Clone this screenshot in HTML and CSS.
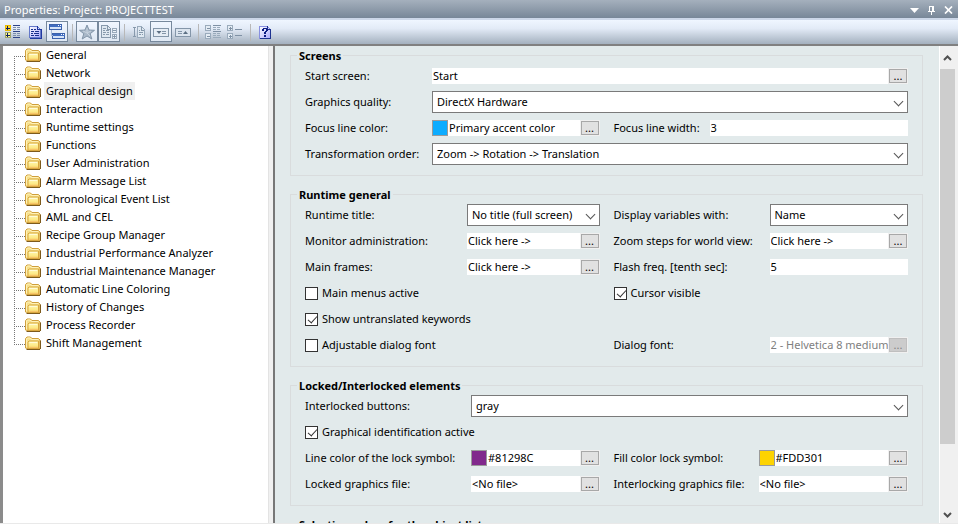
FILE: index.html
```html
<!DOCTYPE html>
<html lang="en">
<head>
<meta charset="utf-8">
<title>Properties</title>
<link rel="stylesheet" href="styles.css">
</head>
<body>
<svg class="defs" aria-hidden="true">
  <defs>
    <linearGradient id="fold" x1="0" y1="0" x2="0" y2="1"><stop offset="0" stop-color="#fff9b4"/><stop offset=".6" stop-color="#fdea88"/><stop offset="1" stop-color="#f6c860"/></linearGradient>
    <linearGradient id="page" x1="0" y1="0" x2="1" y2="1"><stop offset="0" stop-color="#ffffff"/><stop offset="1" stop-color="#a9a9ff"/></linearGradient>
  </defs>
  <symbol id="folder" viewBox="0 0 16 14">
    <path d="M.5 12V2.500L2 1h3.500L7 2.500h6.500L15 4v8.500H1.500z" fill="#f7e08a" stroke="#cf9f3c"/>
    <path d="M1.500 11V3L2.500 2H5l1.500 1.500H13" fill="none" stroke="#fff2b8"/>
    <path d="M3 12.500V6L4 5h9.500v7.500z" fill="url(#fold)" stroke="#d8a840"/>
    <path d="M4.500 6.500H12" stroke="#fffbd8"/>
    <path d="M15.500 4.500V13M1.500 13.500H15" stroke="#7d5a1c"/>
    <path d="M5 11.500h8" stroke="#f7c468"/>
  </symbol>
</svg>
<main class="window">
  <header class="titlebar">
    <h1>Properties: Project: PROJECTTEST</h1>
    <div class="caption">
      <button aria-label="Menu"><svg width="9" height="5" viewBox="0 0 9 5"><path d="M0 0h9L4.500 5z" fill="#fff"/></svg></button>
      <button aria-label="Pin"><svg width="8" height="9" viewBox="0 0 8 9" shape-rendering="crispEdges"><path d="M1 0h5v1H1zM1 1h1v4H1zM4 1h2v4H4zM0 5h7v1H0zM3 6h1v3H3z" fill="#fff"/></svg></button>
      <button aria-label="Close"><svg width="9" height="8" viewBox="0 0 9 8"><path d="M1 .5l7 7M8 .5l-7 7" stroke="#fff" stroke-width="1.700"/></svg></button>
    </div>
  </header>

  <div class="toolbar" role="toolbar">
    <button aria-label="Grouped view"><svg viewBox="0 0 16 16" shape-rendering="crispEdges">
      <path d="M0 1h6v6H0z" fill="#e8b800"/><path d="M1 2h4v4H1z" fill="#ffd92e"/><path d="M0 8h6v6H0z" fill="#9da36a"/><path d="M1 9h4v4H1z" fill="#fff88c"/>
      <path d="M2 2h1v4H2zM1 4h4v1H1zM2 9h1v4H2zM1 11h4v1H1z" fill="#102060"/>
      <path d="M8 1.500h7M8 7.500h7" stroke="#2c4388"/><path d="M8 3.500h3M12 3.500h3M8 5.500h3M12 5.500h3M8 9.500h3M12 9.500h3M8 11.500h3M12 11.500h3" stroke="#7b8fae"/><path d="M8 13.500h7" stroke="#2c4388"/></svg></button>
    <button aria-label="All properties"><svg viewBox="0 0 16 16" shape-rendering="crispEdges">
      <path d="M2.500 2.500h8l3 3v8h-11z" fill="url(#page)" stroke="#6478c8"/><path d="M10.500 2v3.500H14V14H3" fill="none" stroke="#2038a0"/>
      <path d="M4 5.500h2M7 5.500h2M4 7.500h3M8 7.500h4M4 9.500h2M7 9.500h5M4 11.500h3M8 11.500h4" stroke="#18308c"/></svg></button>
    <button class="on" aria-label="Dialog view"><svg viewBox="0 0 16 16" shape-rendering="crispEdges">
      <rect x=".5" y=".5" width="12" height="5" rx="1" fill="#d5e3f8" stroke="#3c62ac"/><path d="M1 1h12v2H1z" fill="#3f6cc0"/><path d="M9 1.500h1M11 1.500h1" stroke="#fff"/>
      <rect x="3.500" y="9.500" width="12" height="5" rx="1" fill="#d5e3f8" stroke="#3c62ac"/><path d="M4 10h12v2H4z" fill="#3f6cc0"/><path d="M12 10.500h1M14 10.500h1" stroke="#fff"/><path d="M2.500 6v5.500H4" fill="none" stroke="#a4b8d8"/></svg></button>
    <span class="sep"></span>
    <button class="on" aria-label="Favorites"><svg viewBox="0 0 16 16"><path d="M8 1l2 5 5.500.3-4.300 3.400 1.600 5.300L8 12l-4.800 3 1.600-5.300L.5 6.300 6 6z" fill="#a9b8c8" stroke="#8295a9"/><path d="M8 4v5l3 3M8 9l4-2M8 9L4 7" stroke="#c6d2de" fill="none"/></svg></button>
    <button class="on" aria-label="Expand page"><svg viewBox="0 0 16 16" shape-rendering="crispEdges">
      <path d="M.5 1.500h6l3 3v9h-9z" fill="#dfe8f1" stroke="#8799ac"/><path d="M6.500 2v3H9M2 4.500h3M2 6.500h2M5 6.500h3M2 8.500h3M6 8.500h2M2 10.500h2M5 10.500h3" stroke="#8799ac" fill="none"/>
      <path d="M11.500 4.500h4v4h-4zM11.500 10.500h4v4h-4z" fill="#eef4fa" stroke="#9aaabb"/><path d="M12 6.500h3M12 12.500h3M13.500 11v3" stroke="#8799ac"/></svg></button>
    <span class="sep"></span>
    <button aria-label="Sort"><svg viewBox="0 0 16 16" shape-rendering="crispEdges">
      <path d="M6.500 2.500h4l3 3v8h-7z" fill="#dfe8f1" stroke="#9aabbc"/><path d="M10.500 3v3H13M8 6.500h1M8 8.500h4M8 10.500h2M11 10.500h1" stroke="#8799ac" fill="none"/><path d="M3.500 3v10M2 3.500h3M2 12.500h3" stroke="#8799ac"/></svg></button>
    <button class="on" aria-label="Expand"><svg viewBox="0 0 16 16"><rect x=".5" y="4.500" width="15" height="8" fill="#e6edf5" stroke="#8496a9"/><path d="M3.500 7h5L6 10z" fill="#5c6f83"/><path d="M9 7.500h4M9 9.500h4" stroke="#8496a9"/></svg></button>
    <button aria-label="Collapse"><svg viewBox="0 0 16 16"><rect x=".5" y="4.500" width="15" height="8" fill="#dbe4ee" stroke="#8496a9"/><path d="M8 10h5l-2.500-3z" fill="#5c6f83"/><path d="M3 7.500h4M3 9.500h4" stroke="#8496a9"/></svg></button>
    <span class="sep"></span>
    <button aria-label="Collapse all"><svg viewBox="0 0 16 16" shape-rendering="crispEdges"><path d="M.5 1.500h5v5h-5zM.5 9.500h5v5h-5z" fill="#e4ecf4" stroke="#9aabbc"/><path d="M2 4.500h3M2 12.500h3M8 1.500h8M8 7.500h8" stroke="#7f91a5"/><path d="M8 3.500h3M12 3.500h3M8 5.500h3M12 5.500h3M8 9.500h3M12 9.500h3M8 11.500h3M12 11.500h3M8 13.500h8" stroke="#9aabbc"/></svg></button>
    <button aria-label="Expand all"><svg viewBox="0 0 16 16" shape-rendering="crispEdges"><path d="M.5 1.500h5v5h-5zM.5 9.500h5v5h-5z" fill="#e4ecf4" stroke="#9aabbc"/><path d="M2 4.500h3M3.500 3v3M2 12.500h3M3.500 11v3M8 5.500h7M8 11.500h7" stroke="#7f91a5"/></svg></button>
    <span class="sep"></span>
    <button aria-label="Help"><svg viewBox="0 0 16 16" shape-rendering="crispEdges"><path d="M2.500 2.500h8l3 3v9h-11z" fill="url(#page)" stroke="#8890e0"/><path d="M10.500 2v3.500H13.500v9H3" fill="none" stroke="#1e3290"/><path d="M6 4h4v1H6zM5 5h2v2H5zM9 5h2v2H9zM8 7h2v1H8zM7 8h2v2H7zM7 11h2v2H7z" fill="#0c1c84"/></svg></button>
  </div>

  <div class="body">
    <nav class="tree">
      <ul>
        <li><svg><use href="#folder"/></svg><a href="#">General</a></li>
        <li><svg><use href="#folder"/></svg><a href="#">Network</a></li>
        <li><svg><use href="#folder"/></svg><a href="#" class="current">Graphical design</a></li>
        <li><svg><use href="#folder"/></svg><a href="#">Interaction</a></li>
        <li><svg><use href="#folder"/></svg><a href="#">Runtime settings</a></li>
        <li><svg><use href="#folder"/></svg><a href="#">Functions</a></li>
        <li><svg><use href="#folder"/></svg><a href="#">User Administration</a></li>
        <li><svg><use href="#folder"/></svg><a href="#">Alarm Message List</a></li>
        <li><svg><use href="#folder"/></svg><a href="#">Chronological Event List</a></li>
        <li><svg><use href="#folder"/></svg><a href="#">AML and CEL</a></li>
        <li><svg><use href="#folder"/></svg><a href="#">Recipe Group Manager</a></li>
        <li><svg><use href="#folder"/></svg><a href="#">Industrial Performance Analyzer</a></li>
        <li><svg><use href="#folder"/></svg><a href="#">Industrial Maintenance Manager</a></li>
        <li><svg><use href="#folder"/></svg><a href="#">Automatic Line Coloring</a></li>
        <li><svg><use href="#folder"/></svg><a href="#">History of Changes</a></li>
        <li><svg><use href="#folder"/></svg><a href="#">Process Recorder</a></li>
        <li><svg><use href="#folder"/></svg><a href="#">Shift Management</a></li>
      </ul>
    </nav>

    <form class="panel">
      <fieldset class="screens">
        <legend>Screens</legend>
        <div class="rows">
          <div class="item wide"><label for="start">Start screen:</label><div class="field"><input id="start" type="text" value="Start"><button type="button" aria-label="Choose start screen">...</button></div></div>
          <div class="item wide"><label for="quality">Graphics quality:</label><div class="drop"><select id="quality"><option>DirectX Hardware</option></select></div></div>
          <div class="item"><label for="focus">Focus line color:</label><div class="field"><span class="swatch blue"></span><input id="focus" type="text" value="Primary accent color"><button type="button" aria-label="Choose focus color">...</button></div></div>
          <div class="item"><label for="width">Focus line width:</label><div class="field"><input id="width" type="text" value="3"></div></div>
          <div class="item wide"><label for="order">Transformation order:</label><div class="drop"><select id="order"><option>Zoom -&gt; Rotation -&gt; Translation</option></select></div></div>
        </div>
      </fieldset>

      <fieldset class="runtime">
        <legend>Runtime general</legend>
        <div class="rows">
          <div class="item"><label for="rtitle">Runtime title:</label><div class="drop"><select id="rtitle"><option>No title (full screen)</option></select></div></div>
          <div class="item"><label for="vars">Display variables with:</label><div class="drop"><select id="vars"><option>Name</option></select></div></div>
          <div class="item"><label for="monitor">Monitor administration:</label><div class="field"><input id="monitor" type="text" value="Click here -&gt;"><button type="button" aria-label="Monitor administration">...</button></div></div>
          <div class="item"><label for="zoom">Zoom steps for world view:</label><div class="field"><input id="zoom" type="text" value="Click here -&gt;"><button type="button" aria-label="Zoom steps">...</button></div></div>
          <div class="item"><label for="frames">Main frames:</label><div class="field"><input id="frames" type="text" value="Click here -&gt;"><button type="button" aria-label="Main frames">...</button></div></div>
          <div class="item"><label for="flash">Flash freq. [tenth sec]:</label><div class="field"><input id="flash" type="text" value="5"></div></div>
          <div class="check"><input id="menus" type="checkbox"><label for="menus">Main menus active</label></div>
          <div class="check"><input id="cursor" type="checkbox" checked><label for="cursor">Cursor visible</label></div>
          <div class="check wide"><input id="untrans" type="checkbox" checked><label for="untrans">Show untranslated keywords</label></div>
          <div class="check"><input id="adjust" type="checkbox"><label for="adjust">Adjustable dialog font</label></div>
          <div class="item"><label for="font">Dialog font:</label><div class="field"><input id="font" type="text" value="2 - Helvetica 8 medium" disabled><button type="button" aria-label="Choose dialog font" disabled>...</button></div></div>
        </div>
      </fieldset>

      <fieldset class="locked">
        <legend>Locked/Interlocked elements</legend>
        <div class="rows">
          <div class="item wide"><label for="buttons">Interlocked buttons:</label><div class="drop"><select id="buttons"><option>gray</option></select></div></div>
          <div class="check wide"><input id="ident" type="checkbox" checked><label for="ident">Graphical identification active</label></div>
          <div class="item"><label for="lcolor">Line color of the lock symbol:</label><div class="field"><span class="swatch purple"></span><input id="lcolor" type="text" value="#81298C"><button type="button" aria-label="Choose line color">...</button></div></div>
          <div class="item"><label for="fcolor">Fill color lock symbol:</label><div class="field"><span class="swatch yellow"></span><input id="fcolor" type="text" value="#FDD301"><button type="button" aria-label="Choose fill color">...</button></div></div>
          <div class="item"><label for="lfile">Locked graphics file:</label><div class="field"><input id="lfile" type="text" value="&lt;No file&gt;"><button type="button" aria-label="Choose locked file">...</button></div></div>
          <div class="item"><label for="ifile">Interlocking graphics file:</label><div class="field"><input id="ifile" type="text" value="&lt;No file&gt;"><button type="button" aria-label="Choose interlocking file">...</button></div></div>
        </div>
      </fieldset>

      <fieldset>
        <legend>Selection colors for the object lists</legend>
      </fieldset>
    </form>

    <div class="scroll">
      <button aria-label="Scroll up"><svg width="9" height="6" viewBox="0 0 9 6"><path d="M1 5l3.500-3.500L8 5" fill="none" stroke="#505050" stroke-width="2"/></svg></button>
      <div class="thumb"></div>
      <div class="track"></div>
      <button aria-label="Scroll down"><svg width="9" height="6" viewBox="0 0 9 6"><path d="M1 1l3.500 3.500L8 1" fill="none" stroke="#505050" stroke-width="2"/></svg></button>
    </div>
  </div>
</main>
</body>
</html>
```
FILE: styles.css
```css
* { box-sizing: border-box; }

body {
  margin: 0;
  background: #fff;
  color: #000;
  font: 11px/16px "Noto Sans", "Open Sans", sans-serif;
}

button, input, select { font: inherit; color: inherit; margin: 0; }

.defs { position: absolute; width: 0; height: 0; }

.window {
  display: flex;
  flex-direction: column;
  height: 100vh;
  padding-bottom: 2px;
  overflow: hidden;
}

/* Title bar */
.titlebar {
  flex: none;
  display: flex;
  align-items: center;
  justify-content: space-between;
  height: 18px;
  padding: 2px 5px 0 4px;
  background: linear-gradient(#a5b0bd, #788798);
}

.titlebar h1 { margin: 0; font-size: 11px; font-weight: 400; color: #fff; }

.caption { display: flex; gap: 8px; }

.caption button {
  display: flex;
  align-items: center;
  justify-content: center;
  width: 9px;
  height: 12px;
  padding: 0;
  border: 0;
  background: none;
}

.caption svg { flex: none; }

/* Toolbar */
.toolbar {
  flex: none;
  display: flex;
  height: 28px;
  padding: 1px 2px 0;
  border-top: 2px solid #ccd7e8;
  border-bottom: 2px solid #808080;
  background: linear-gradient(#eff6ff, #e3ebf7 35%, #a3b0be);
}

.toolbar button {
  display: flex;
  align-items: center;
  justify-content: center;
  width: 22px;
  height: 21px;
  padding: 0;
  border: 0;
  background: none;
}

.toolbar button.on { border: 1px solid #76889c; background: linear-gradient(#f0f6ff, #dfe8f3); }
.toolbar svg { flex: none; width: 16px; height: 16px; }

.sep { width: 8px; padding: 3px 0; }
.sep::before { content: ""; display: block; width: 1px; height: 17px; margin-left: 4px; background: #b8b8b8; }

/* Columns */
.body {
  flex: 1;
  display: flex;
  min-height: 0;
  padding-right: 3px;
  border-bottom: 1px solid #e9e9e9;
  background: #f0f0f0;
}

/* Navigation tree */
.tree {
  flex: 0 0 269px;
  padding-left: 11px;
  border-left: 3px solid #8b8b8b;
  border-right: 1px solid #e3e3e3;
  background: #fff;
}

.tree ul { margin: 0; padding: 0; list-style: none; }
.tree li { display: flex; align-items: center; height: 18px; }
.tree svg { width: 16px; height: 14px; margin-right: 3px; }
.tree a { padding: 0 2px; line-height: 18px; color: inherit; text-decoration: none; }
.tree a.current { background: #f0f0f0; }

.tree li::before {
  content: "";
  width: 11px;
  height: 18px;
  background:
    repeating-linear-gradient(90deg, #777 0 1px, transparent 1px 2px) 0 10px / 11px 1px no-repeat,
    repeating-linear-gradient(#777 0 1px, transparent 1px 2px) 0 0 / 1px 18px no-repeat;
}

.tree li:first-child::before { background-position: 0 10px, 0 10px; }
.tree li:last-child::before { background-size: 11px 1px, 1px 10px; }

/* Property form */
.panel {
  flex: 1;
  display: flex;
  flex-direction: column;
  gap: 10px;
  min-width: 0;
  margin-left: 4px;
  padding: 1px 16px 0 15px;
  overflow: hidden;
  border-left: 2px solid #777;
  border-right: 1px solid #fff;
  background: #e2eaeb;
}

fieldset {
  flex: none;
  min-width: 0;
  margin: 0;
  padding: 0 14px 8px;
  border: 1px solid #d9dcdd;
}

legend { height: 16px; margin-left: -8px; padding: 0 2px; font-weight: 700; line-height: 18px; }

.rows {
  display: grid;
  grid-template-columns: 1fr 1fr;
  grid-auto-rows: 26px;
  column-gap: 14px;
}

.item { display: grid; align-items: center; min-width: 0; }
.wide { grid-column: 1 / -1; }

.screens .item { grid-template-columns: 127px 1fr; }
.screens .item:nth-child(4) { grid-template-columns: 96px 1fr; }
.runtime .item { grid-template-columns: 162px 1fr; }
.runtime .item:nth-child(2n), .runtime .item:last-child { grid-template-columns: 156px 1fr; }
.locked .item { grid-template-columns: 166px 1fr; }
.locked .item:nth-child(2n) { grid-template-columns: 145px 1fr; }

label { white-space: nowrap; }

.field { display: flex; min-width: 0; height: 16px; background: #fff; }

.field input {
  flex: 1;
  min-width: 0;
  height: 16px;
  padding: 0 0 0 1px;
  border: 0;
  background: none;
}

.field input:disabled { color: #808080; }

.field button {
  flex: none;
  width: 20px;
  height: 16px;
  padding: 0;
  border: 1px solid #f0f0f0;
  outline: 1px solid #a8a8a8;
  outline-offset: -2px;
  background: #e1e1e1;
  line-height: 14px;
}

.field button:disabled { background: #ccc; outline-color: #bfbfbf; color: #838383; }

.swatch { flex: none; width: 16px; border: 1px solid #9a9a9a; }
.blue { background: #0cacff; }
.purple { background: #81298c; }
.yellow { background: #fdd301; }

.drop { position: relative; display: flex; min-width: 0; }

.drop select {
  appearance: none;
  width: 100%;
  height: 22px;
  padding: 0 16px 0 4px;
  border: 1px solid #7a7a7a;
  border-radius: 0;
  background: #fff;
}

.drop::after {
  content: "";
  position: absolute;
  top: 7px;
  right: 6px;
  width: 6px;
  height: 6px;
  border: solid #555;
  border-width: 0 1px 1px 0;
  transform: rotate(45deg);
  pointer-events: none;
}

.check { display: flex; align-items: center; gap: 4px; }

.check input {
  appearance: none;
  position: relative;
  width: 13px;
  height: 13px;
  border: 1px solid #333;
  background: #fff;
}

.check input:checked::after {
  content: "";
  position: absolute;
  top: 0;
  left: 4px;
  width: 4px;
  height: 8px;
  border: solid #333;
  border-width: 0 1px 1px 0;
  transform: rotate(42deg);
}

/* Scroll bar */
.scroll { flex: 0 0 15px; display: flex; flex-direction: column; background: #f0f0f0; }

.scroll button {
  display: flex;
  align-items: center;
  justify-content: center;
  height: 23px;
  padding: 0;
  border: 0;
  background: none;
}

.scroll button:last-child { height: 17px; }
.thumb { flex: 376; background: #cdcdcd; }
.track { flex: 62; }
```
